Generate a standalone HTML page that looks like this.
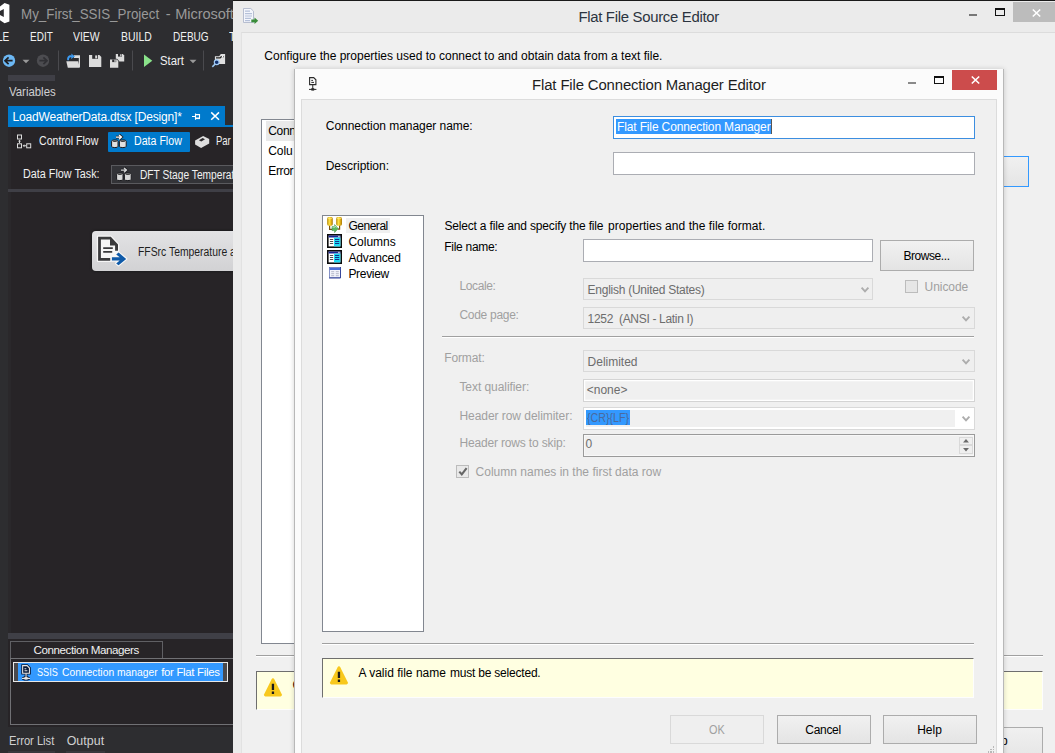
<!DOCTYPE html>
<html><head><meta charset="utf-8"><title>Flat File Connection Manager Editor</title>
<style>
html,body{margin:0;padding:0;}
body{width:1055px;height:753px;overflow:hidden;position:relative;background:#2d2d30;font-family:"Liberation Sans",sans-serif;}
.t{position:absolute;white-space:pre;font-family:"Liberation Sans",sans-serif;}
.r{position:absolute;box-sizing:border-box;}
svg{position:absolute;overflow:visible;}
</style></head><body>
<div class="r" style="left:0px;top:0px;width:233px;height:753px;background:#2d2d30;"></div>
<div class="r" style="left:8px;top:127px;width:225px;height:506px;background:#2a282b;"></div>
<div class="r" style="left:11px;top:127px;width:222px;height:506px;background:#272427;"></div>
<span class="t " style="left:21.40px;top:6px;font-size:14.6px;line-height:16px;color:#999999;transform:scaleX(0.9158);transform-origin:0 0;">My_First_SSIS_Project</span>
<span class="t " style="left:165.80px;top:6px;font-size:14.6px;line-height:16px;color:#999999;">-</span>
<span class="t " style="left:175.20px;top:6px;font-size:14.6px;line-height:16px;color:#999999;letter-spacing:-0.058px;">Microsoft</span>
<svg style="left:0;top:3px" width="10" height="21" viewBox="0 0 10 21"><path d="M0 3.6 L4.6 0 L9.4 1.7 V18.5 L4.6 20.2 L0 17.3 Z M3.8 6 L3.8 14 L-4 9.9 Z" fill="#ffffff" fill-rule="evenodd"/></svg>
<span class="t " style="left:-3.40px;top:30px;font-size:12.5px;line-height:14px;color:#f1f1f1;transform:scaleX(0.8045);transform-origin:0 0;">LE</span>
<span class="t " style="left:29.80px;top:30px;font-size:12.5px;line-height:14px;color:#f1f1f1;transform:scaleX(0.8008);transform-origin:0 0;">EDIT</span>
<span class="t " style="left:73.40px;top:30px;font-size:12.5px;line-height:14px;color:#f1f1f1;transform:scaleX(0.8358);transform-origin:0 0;">VIEW</span>
<span class="t " style="left:120.60px;top:30px;font-size:12.5px;line-height:14px;color:#f1f1f1;transform:scaleX(0.8339);transform-origin:0 0;">BUILD</span>
<span class="t " style="left:172.90px;top:30px;font-size:12.5px;line-height:14px;color:#f1f1f1;transform:scaleX(0.8009);transform-origin:0 0;">DEBUG</span>
<span class="t " style="left:229.20px;top:30px;font-size:12.5px;line-height:14px;color:#f1f1f1;transform:scaleX(0.8870);transform-origin:0 0;">TEAM</span>
<svg style="left:0;top:50px" width="233" height="22" viewBox="0 50 233 22"><circle cx="9" cy="60.7" r="6.2" fill="#6cb8f4"/><path d="M8.6 57.3 L5 60.7 L8.6 64.1 M5.2 60.7 H12.6" stroke="#1e1e22" stroke-width="1.7" fill="none"/><path d="M22.5 59.7 H29.5 L26 63.2 Z" fill="#999"/><circle cx="43" cy="60.7" r="6.2" fill="#4c4c50"/><path d="M43.4 57.3 L47 60.7 L43.4 64.1 M46.8 60.7 H39.4" stroke="#303034" stroke-width="1.7" fill="none"/><rect x="58" y="50.5" width="1" height="20" fill="#4a4a4e"/><path d="M66.3 61.2 H78.2 L79.8 67.8 H67.8 Z" fill="#dcdcdc"/><path d="M74 55.2 H80 V67 H78.8 V58 H74 Z" fill="#dcdcdc"/><path d="M67.2 60.2 C66.6 56.5 69.5 54.6 71.6 55.6 L71.2 53.6 L75 56.6 L71 59 L71.4 57.4 C70 56.8 68.8 58 69 60.2 Z" fill="#3c9af0"/><path d="M89 55 H99.4 L101.3 56.9 V67 H89 Z" fill="#dcdcdc"/><rect x="92.2" y="55" width="5.8" height="3.8" fill="#2d2d30"/><rect x="95.2" y="55.4" width="2" height="3" fill="#dcdcdc"/><path d="M115.8 54 H122.8 L124.2 55.4 V61.6 H115.8 Z" fill="#dcdcdc"/><rect x="118" y="54" width="4" height="2.6" fill="#2d2d30"/><rect x="120.2" y="54.2" width="1.3" height="2.2" fill="#dcdcdc"/><path d="M109.2 58.7 H117 L119.2 60.9 V68.6 H109.2 Z" fill="#2d2d30"/><path d="M110 59.5 H116.8 L118.3 61 V67.8 H110 Z" fill="#dcdcdc"/><rect x="112.2" y="59.5" width="4" height="2.6" fill="#2d2d30"/><rect x="114.4" y="59.7" width="1.3" height="2.2" fill="#dcdcdc"/><rect x="132" y="50.5" width="1" height="20" fill="#4a4a4e"/><path d="M144 54.5 L152.3 60.7 L144 67 Z" fill="#8ae28a"/><path d="M189.5 59.7 H196.5 L193 63.2 Z" fill="#999"/><rect x="203" y="50.5" width="1" height="20" fill="#4a4a4e"/><path d="M214.9 56.2 H219.2 L220.8 54 H225.1 V64.1 H214.9 Z" fill="#e0e0e0"/><path d="M216 57.8 H220.2 L221.4 56.6 H224" stroke="#222" stroke-width="1.3" fill="none"/><circle cx="222.6" cy="56.6" r="0.9" fill="#fff"/><path d="M215.2 64 L212.3 66.8" stroke="#9cc8f4" stroke-width="1.6"/><circle cx="216.7" cy="62.3" r="2.4" fill="#12306c" stroke="#a4ccf4" stroke-width="1.2"/></svg>
<span class="t " style="left:160.40px;top:54px;font-size:12.5px;line-height:14px;color:#f1f1f1;transform:scaleX(0.9054);transform-origin:0 0;">Start</span>
<div class="r" style="left:8px;top:74.5px;width:47px;height:6px;background:#3f3f46;"></div>
<span class="t " style="left:8.50px;top:85px;font-size:12.4px;line-height:14px;color:#d0d0d0;transform:scaleX(0.9198);transform-origin:0 0;">Variables</span>
<div class="r" style="left:8px;top:106px;width:217px;height:21px;background:#007acc;"></div>
<div class="r" style="left:8px;top:124.5px;width:225px;height:2.9px;background:#007acc;"></div>
<span class="t " style="left:12.50px;top:110px;font-size:12px;line-height:14px;color:#ffffff;letter-spacing:-0.181px;">LoadWeatherData.dtsx [Design]*</span>
<svg style="left:190px;top:110px" width="32" height="12" viewBox="190 110 32 12"><path d="M192 116.5 H195.5 M195.5 113.5 V119.7 M195.5 114.6 H199.5 V118" stroke="#fff" stroke-width="1.1" fill="none"/><path d="M195.5 118.3 H200" stroke="#fff" stroke-width="1.6"/><path d="M211.2 112.4 L219 119.8 M219 112.4 L211.2 119.8" stroke="#fff" stroke-width="1.5" fill="none"/></svg>
<svg style="left:16px;top:133px" width="17" height="16" viewBox="16 133 17 16"><g fill="none" stroke="#dcdcdc" stroke-width="1"><rect x="17.5" y="135" width="4" height="4"/><rect x="17.5" y="143.8" width="4" height="4"/><rect x="26.7" y="143.8" width="4" height="4"/></g><path d="M19.5 139.8 L21 141.6 H20 V143 H19 V141.6 H18 Z M22.6 145.8 L24.4 144.3 V145.3 H26 V146.3 H24.4 V147.3 Z" fill="#dcdcdc"/></svg>
<span class="t " style="left:38.70px;top:134px;font-size:12px;line-height:14px;color:#f1f1f1;transform:scaleX(0.8804);transform-origin:0 0;">Control Flow</span>
<div class="r" style="left:108px;top:132px;width:82px;height:20px;background:#007acc;border-radius:1px;"></div>
<svg style="left:111.2px;top:134px" width="16" height="15" viewBox="0 0 16 15"><path d="M0.6 7.2 V12.3 A3.2 1.3 0 0 0 7 12.3 V7.2 A3.2 1.3 0 0 0 0.6 7.2 Z" fill="#e0e0e0" stroke="#1a1a1e" stroke-width="1"/><ellipse cx="3.8" cy="7.3" rx="2.3" ry="0.8" fill="#3a3a3a"/><path d="M8.4 7.2 V12.3 A3.4 1.3 0 0 0 15.2 12.3 V7.2 A3.4 1.3 0 0 0 8.4 7.2 Z" fill="#e0e0e0" stroke="#1a1a1e" stroke-width="1"/><ellipse cx="11.8" cy="7.3" rx="2.5" ry="0.8" fill="#3a3a3a"/><path d="M5 3.1 H10 M8 0.9 L10.5 3.1 L8 5.3" fill="none" stroke="#1a1a1e" stroke-width="2.8"/><path d="M5 3.1 H10 M8 0.9 L10.5 3.1 L8 5.3" fill="none" stroke="#fff" stroke-width="1.3"/></svg>
<span class="t " style="left:133.50px;top:134px;font-size:12px;line-height:14px;color:#ffffff;transform:scaleX(0.8849);transform-origin:0 0;">Data Flow</span>
<svg style="left:194px;top:135px" width="16" height="14" viewBox="194 135 16 14"><path d="M195.1 140.6 L203.1 135.9 L209.2 139 V143.6 L201.1 147.9 L195.1 144.4 Z" fill="#dedede"/><path d="M198.9 140.2 L202.6 138 L205 139.3 L201.3 141.6 Z" fill="#2a282b"/></svg>
<span class="t " style="left:216.30px;top:134px;font-size:12px;line-height:14px;color:#f1f1f1;transform:scaleX(0.7903);transform-origin:0 0;">Par</span>
<span class="t " style="left:23.20px;top:167px;font-size:12px;line-height:14px;color:#f1f1f1;transform:scaleX(0.8997);transform-origin:0 0;">Data Flow Task:</span>
<div class="r" style="left:111px;top:165px;width:129px;height:19px;background:#333337;border:1px solid #5a5a5e;"></div>
<svg style="left:116.2px;top:167.3px" width="16" height="15" viewBox="0 0 16 15"><path d="M0.6 7.2 V12.3 A3.2 1.3 0 0 0 7 12.3 V7.2 A3.2 1.3 0 0 0 0.6 7.2 Z" fill="#d8d8d8" stroke="#1a1a1e" stroke-width="1"/><ellipse cx="3.8" cy="7.3" rx="2.3" ry="0.8" fill="#3a3a3a"/><path d="M8.4 7.2 V12.3 A3.4 1.3 0 0 0 15.2 12.3 V7.2 A3.4 1.3 0 0 0 8.4 7.2 Z" fill="#d8d8d8" stroke="#1a1a1e" stroke-width="1"/><ellipse cx="11.8" cy="7.3" rx="2.5" ry="0.8" fill="#3a3a3a"/><path d="M5 3.1 H10 M8 0.9 L10.5 3.1 L8 5.3" fill="none" stroke="#1a1a1e" stroke-width="2.8"/><path d="M5 3.1 H10 M8 0.9 L10.5 3.1 L8 5.3" fill="none" stroke="#d8d8d8" stroke-width="1.3"/></svg>
<span class="t " style="left:140.40px;top:168px;font-size:12px;line-height:14px;color:#f1f1f1;transform:scaleX(0.8501);transform-origin:0 0;">DFT Stage Temperature</span>
<div class="r" style="left:8px;top:189px;width:225px;height:3px;background:#3f3f46;"></div>
<div class="r" style="left:92px;top:231px;width:148px;height:40px;background:linear-gradient(#e2e2e4,#d2d2d4);border-radius:4px;box-shadow:0 0 2px 1px #1c1c1e;"></div>
<svg style="left:96px;top:235px" width="32" height="32" viewBox="96 235 32 32"><path d="M98.1 236.8 H110.8 L118 244.6 V258 H110.2 V260.7 H98.1 Z" fill="#f6f6f6" stroke="#f6f6f6" stroke-width="2.6" stroke-linejoin="round"/><path d="M116.2 254.4 L118.6 252.6 L126.2 258.9 L118.6 265.2 L116.2 263.4 L119.7 260.5 H111.9 V257.2 H119.7 Z" fill="#f6f6f6" stroke="#f6f6f6" stroke-width="2.4" stroke-linejoin="round"/><path d="M98.1 236.8 H110.8 L118 244.6 V250.8 H115.1 V245.4 H110 V239.5 H100.9 V258.1 H110.2 V260.7 H98.1 Z" fill="#3a3a3c"/><path d="M103.2 247.3 H112.8 V248.9 H103.2 Z M103.2 251.1 H112.2 V252.7 H103.2 Z" fill="#3a3a3c"/><path d="M116.2 254.4 L118.6 252.6 L126.2 258.9 L118.6 265.2 L116.2 263.4 L119.7 260.5 H111.9 V257.2 H119.7 Z" fill="#0f5aa8"/></svg>
<span class="t " style="left:138.40px;top:245px;font-size:12px;line-height:14px;color:#1e1e1e;transform:scaleX(0.8648);transform-origin:0 0;">FFSrc Temperature a</span>
<div class="r" style="left:8px;top:633px;width:225px;height:5.5px;background:#3f3f46;"></div>
<div class="r" style="left:8px;top:638.5px;width:225px;height:88.5px;background:#272427;"></div>
<div class="r" style="left:10px;top:641px;width:153px;height:18px;border:1px solid #606064;border-bottom:none;"></div>
<div class="r" style="left:10px;top:658px;width:230px;height:67px;border:1px solid #707074;border-right:none;"></div>
<span class="t " style="left:33.50px;top:644px;font-size:11.6px;line-height:12px;color:#f1f1f1;letter-spacing:-0.421px;">Connection Managers</span>
<div class="r" style="left:13px;top:662px;width:215px;height:20px;background:#3399ff;border:1px solid #e8e8e8;"></div>
<div class="r" style="left:14px;top:663px;width:3.7px;height:18px;background:#4a4a4e;"></div>
<div class="r" style="left:223px;top:663px;width:4px;height:18px;background:#4a4a4e;"></div>
<svg style="left:22.2px;top:664.7px" width="8.64" height="15.12" viewBox="0 0 8 14"><path d="M0.6 0.6 H4.7 L6.9 2.8 V7.6 H0.6 Z" fill="#0a1a38" stroke="#0a1a38" stroke-width="2.6"/><path d="M2.3 3.4 H4 M2.3 5.4 H5" stroke="#0a1a38" stroke-width="2.6"/><path d="M3.75 7.6 V12 M0 12.4 H7.4" stroke="#0a1a38" stroke-width="2.6"/><rect x="2.3" y="11.2" width="2.9" height="2.4" fill="#0a1a38" stroke="#0a1a38" stroke-width="1.6"/></svg>
<svg style="left:22.2px;top:664.7px" width="8.64" height="15.12" viewBox="0 0 8 14"><path d="M0.6 0.6 H4.7 L6.9 2.8 V7.6 H0.6 Z" fill="none" stroke="#e6e6e6" stroke-width="1"/><path d="M2.3 3.4 H4 M2.3 5.4 H5" stroke="#e6e6e6" stroke-width="1"/><path d="M3.75 7.6 V12 M0 12.4 H7.4" stroke="#e6e6e6" stroke-width="1"/><rect x="2.3" y="11.2" width="2.9" height="2.4" fill="#e6e6e6" stroke="#e6e6e6" stroke-width="0"/></svg>
<span class="t " style="left:36.60px;top:666px;font-size:11.4px;line-height:12px;color:#ffffff;transform:scaleX(0.8045);transform-origin:0 0;">SSIS</span>
<span class="t " style="left:61.70px;top:666px;font-size:11.4px;line-height:12px;color:#ffffff;transform:scaleX(0.9042);transform-origin:0 0;">Connection manager</span>
<span class="t " style="left:161.20px;top:666px;font-size:11.4px;line-height:12px;color:#ffffff;letter-spacing:-0.301px;">for Flat Files</span>
<span class="t " style="left:8.50px;top:734px;font-size:12.4px;line-height:14px;color:#d0d0d0;transform:scaleX(0.9007);transform-origin:0 0;">Error List</span>
<span class="t " style="left:66.70px;top:734px;font-size:12.4px;line-height:14px;color:#d0d0d0;letter-spacing:0.046px;">Output</span>
<div class="r" style="left:8px;top:751.4px;width:47px;height:1.6px;background:#38383d;"></div>
<div class="r" style="left:66px;top:751.4px;width:39px;height:1.6px;background:#38383d;"></div>
<div class="r" style="left:233px;top:0px;width:827px;height:760px;background:#ebebeb;"></div>
<div class="r" style="left:233px;top:0px;width:827px;height:1px;background:#1a1a1a;"></div>
<div class="r" style="left:240.5px;top:31.5px;width:819.5px;height:728.5px;background:#f0f0f0;border-left:1px solid #e2e2e2;border-top:1px solid #dcdcdc;"></div>
<span class="t " style="left:578.40px;top:9px;font-size:14.9px;line-height:16px;color:#2b3440;letter-spacing:-0.296px;">Flat File Source Editor</span>
<svg style="left:243px;top:8px" width="16" height="16" viewBox="0 0 16 16"><path d="M0.5 0.5 H7.8 L10.5 3.2 V14.5 H0.5 Z" fill="#f4f6fc" stroke="#b0b8cc" stroke-width="0.9"/><path d="M2 3.2 H7 M2 5.6 H9 M2 8 H9 M2 10.4 H8 M2 12.6 H7" stroke="#b4c0d8" stroke-width="1.2"/><path d="M8.3 11.4 H11.5 V9.6 L15.2 12.8 L11.5 16 V14.2 H8.3 Z" fill="#3a8c3a"/></svg>
<div class="r" style="left:969px;top:13.6px;width:8.3px;height:2.2px;background:#777;"></div>
<div class="r" style="left:994.8px;top:7.8px;width:10.4px;height:8.3px;border:1.2px solid #111;border-top-width:2.6px;"></div>
<div class="r" style="left:1012.8px;top:2.2px;width:47.2px;height:19.6px;background:#bcbcbc;"></div>
<svg style="left:1031.5px;top:8.5px" width="9" height="8" viewBox="0 0 9 8"><path d="M0.8 0.5 L8.2 7.5 M8.2 0.5 L0.8 7.5" stroke="#fff" stroke-width="1.6" fill="none"/></svg>
<span class="t " style="left:264.30px;top:49px;font-size:12px;line-height:14px;color:#000000;letter-spacing:-0.002px;">Configure the properties used to connect to and obtain data from a text file.</span>
<div class="r" style="left:261px;top:119px;width:139px;height:525px;background:#fff;border:1px solid #828790;"></div>
<div class="r" style="left:266px;top:121.2px;width:134px;height:19.6px;background:#e9e9e9;"></div>
<span class="t " style="left:268.30px;top:124px;font-size:12px;line-height:14px;color:#000;letter-spacing:-0.338px;">Conn</span>
<span class="t " style="left:268.30px;top:144px;font-size:12px;line-height:14px;color:#000;letter-spacing:-0.095px;">Colu</span>
<span class="t " style="left:268.30px;top:164px;font-size:12px;line-height:14px;color:#000;letter-spacing:-0.353px;">Error</span>
<div class="r" style="left:990px;top:156.2px;width:38.8px;height:30.6px;background:linear-gradient(#f0f0f0,#e5e5e5);border:1px solid #3399ff;"></div>
<div class="r" style="left:256px;top:654.8px;width:787px;height:1px;background:#a0a0a0;"></div>
<div class="r" style="left:256px;top:655.8px;width:787px;height:1px;background:#ffffff;"></div>
<div class="r" style="left:256.4px;top:670.5px;width:786.2px;height:39.1px;background:#ffffe1;border-top:1.6px solid #6e6e6e;border-left:1.6px solid #6e6e6e;border-right:1px solid #fdfdfd;border-bottom:1px solid #fdfdfd;"></div>
<svg style="left:263.2px;top:676.9px" width="19.9" height="20.6" viewBox="0 0 19 18" preserveAspectRatio="none"><path d="M9.5 1.2 Q10.4 1.2 10.9 2.1 L17.9 15 Q18.5 16.8 16.8 17 H2.2 Q0.5 16.8 1.1 15 L8.1 2.1 Q8.6 1.2 9.5 1.2 Z" fill="#f8c81c"/><path d="M8.4 5.8 H10.6 V11.3 H8.4 Z M8.4 12.6 H10.6 V14.8 H8.4 Z" fill="#1a1a1a"/></svg>
<span class="t " style="left:292.50px;top:678px;font-size:12px;line-height:14px;color:#200000;">Connection manager</span>
<div class="r" style="left:960px;top:727.3px;width:82.9px;height:32.7px;background:linear-gradient(#f0f0f0,#e5e5e5);border:1px solid #acacac;"></div>
<span class="t " style="left:984.00px;top:734px;font-size:12px;line-height:14px;color:#000;letter-spacing:-0.345px;">Help</span>
<div class="r" style="left:294px;top:68.6px;width:710.2px;height:691.4px;background:#b8b8b8;box-shadow:0 0 5px rgba(0,0,0,0.17);"></div>
<div class="r" style="left:295px;top:69.4px;width:708.4px;height:690.6px;background:#fbfbfb;"></div>
<div class="r" style="left:301px;top:99.4px;width:695.6px;height:660.6px;background:#f0f0f0;border:1px solid #dcdcdc;border-bottom:none;"></div>
<span class="t " style="left:532.10px;top:77px;font-size:14.9px;line-height:16px;color:#1e1e1e;letter-spacing:-0.135px;">Flat File Connection Manager Editor</span>
<svg style="left:308.6px;top:76.8px" width="8" height="14" viewBox="0 0 8 14"><path d="M0.6 0.6 H4.7 L6.9 2.8 V7.6 H0.6 Z" fill="none" stroke="#2a2a2a" stroke-width="1.1"/><path d="M2.3 3.4 H4 M2.3 5.4 H5" stroke="#2a2a2a" stroke-width="1"/><path d="M3.75 7.6 V12 M0 12.4 H7.4" stroke="#2a2a2a" stroke-width="1"/><rect x="2.3" y="11.2" width="2.9" height="2.4" fill="#2a2a2a" stroke="#2a2a2a" stroke-width="0"/></svg>
<div class="r" style="left:907.8px;top:81.7px;width:8.5px;height:2.2px;background:#8a8a8a;"></div>
<div class="r" style="left:934px;top:76px;width:10.2px;height:8.2px;border:1.2px solid #111;border-top-width:2.6px;"></div>
<div class="r" style="left:952.2px;top:69.7px;width:44.6px;height:20.1px;background:#cc4c4c;"></div>
<svg style="left:970.5px;top:76px" width="9" height="8" viewBox="0 0 9 8"><path d="M0.8 0.5 L8.2 7.5 M8.2 0.5 L0.8 7.5" stroke="#fff" stroke-width="1.6" fill="none"/></svg>
<span class="t " style="left:325.80px;top:119px;font-size:12px;line-height:14px;color:#000;letter-spacing:-0.054px;">Connection manager name:</span>
<div class="r" style="left:613px;top:116px;width:362px;height:23px;background:#fff;border:1px solid #3c8ee0;"></div>
<div class="r" style="left:616px;top:119px;width:155.5px;height:15px;background:#3399ff;"></div>
<span class="t " style="left:617.00px;top:120px;font-size:12px;line-height:14px;color:#fff;letter-spacing:-0.140px;">Flat File Connection Manager</span>
<div class="r" style="left:771px;top:119px;width:1px;height:15px;background:#555;"></div>
<span class="t " style="left:325.70px;top:159px;font-size:12px;line-height:14px;color:#000;">Description:</span>
<div class="r" style="left:613px;top:152px;width:362px;height:23px;background:#fff;border:1px solid #abadb3;"></div>
<div class="r" style="left:322px;top:215px;width:102px;height:417px;background:#fff;border:1px solid #828790;"></div>
<div class="r" style="left:346px;top:218px;width:44px;height:15px;background:#f0f0f0;"></div>
<span class="t " style="left:348.40px;top:219px;font-size:12px;line-height:14px;color:#000;letter-spacing:-0.470px;">General</span>
<span class="t " style="left:348.40px;top:235px;font-size:12px;line-height:14px;color:#000;letter-spacing:0.007px;">Columns</span>
<span class="t " style="left:348.40px;top:251px;font-size:12px;line-height:14px;color:#000;letter-spacing:-0.134px;">Advanced</span>
<span class="t " style="left:348.40px;top:267px;font-size:12px;line-height:14px;color:#000;letter-spacing:-0.311px;">Preview</span>
<svg style="left:326px;top:216px" width="18" height="18" viewBox="326 216 18 18"><defs><linearGradient id="cy" x1="0" x2="1" y1="0" y2="0"><stop offset="0" stop-color="#b88a10"/><stop offset="0.4" stop-color="#fce040"/><stop offset="0.6" stop-color="#f4c420"/><stop offset="1" stop-color="#a87808"/></linearGradient></defs><path d="M329.6 225 V229.3 H333 M339.6 225 V229.2 H337.6" stroke="#7a5210" stroke-width="1.2" fill="none"/><rect x="327.1" y="217" width="5.7" height="8.7" rx="1.6" fill="url(#cy)"/><rect x="336.1" y="217" width="5.9" height="8.7" rx="1.6" fill="url(#cy)"/><path d="M327.6 218.2 Q330 219.4 332.3 218.2 M336.6 218.2 Q339 219.4 341.5 218.2" stroke="#fff4a0" stroke-width="0.6" fill="none"/><path d="M332 226.6 H334.6 V224.6 L338.2 228.6 L334.6 232.6 V230.6 H332 Z" fill="#5cb85c" stroke="#3c8c3c" stroke-width="0.5"/><path d="M332.3 227.2 H335 V225.8 L336.6 227.6" stroke="#c8ecc8" stroke-width="0.8" fill="none"/></svg>
<svg style="left:327px;top:234px" width="15" height="14" viewBox="0 0 15 14"><rect x="0" y="0" width="15" height="14" fill="#0c0c0c"/><rect x="1.6" y="1.6" width="11.8" height="10.8" fill="#ffffff"/><rect x="1.6" y="1.6" width="11.8" height="1.9" fill="#1a2494"/><rect x="11.3" y="1.9" width="1.3" height="1.2" fill="#fff"/><rect x="7" y="3.6" width="6.4" height="8.8" fill="#20dcf4"/><path d="M2.9 5.5 H6.2 M2.9 7.5 H6.2 M2.9 9.5 H6.2" stroke="#505050" stroke-width="1"/><path d="M8 5.5 H12.2 M8 7.5 H12.2 M8 9.5 H12.2" stroke="#10308c" stroke-width="1.1"/></svg>
<svg style="left:327px;top:250px" width="15" height="14" viewBox="0 0 15 14"><rect x="0" y="0" width="15" height="14" fill="#0c0c0c"/><rect x="1.6" y="1.6" width="11.8" height="10.8" fill="#ffffff"/><rect x="1.6" y="1.6" width="11.8" height="1.9" fill="#1a2494"/><rect x="11.3" y="1.9" width="1.3" height="1.2" fill="#fff"/><rect x="7" y="3.6" width="6.4" height="8.8" fill="#20dcf4"/><path d="M2.9 5.5 H6.2 M2.9 7.5 H6.2 M2.9 9.5 H6.2" stroke="#505050" stroke-width="1"/><path d="M8 5.5 H12.2 M8 7.5 H12.2 M8 9.5 H12.2" stroke="#10308c" stroke-width="1.1"/></svg>
<svg style="left:329px;top:267px" width="12" height="11" viewBox="0 0 12 11"><rect x="0.4" y="0.4" width="11.2" height="10.2" fill="#f2f4fc" stroke="#6878b8" stroke-width="0.8"/><path d="M11.5 0 V11 H0" stroke="#38489c" stroke-width="1" fill="none"/><rect x="0.8" y="0.8" width="10.4" height="2.2" fill="#4c70d8"/><path d="M2.2 4.7 H5.2 M2.2 6.7 H5.2 M2.2 8.7 H5.2 M6.8 4.7 H9.8 M6.8 6.7 H9.8 M6.8 8.7 H9.8" stroke="#b4b8c8" stroke-width="1"/></svg>
<span class="t " style="left:444.40px;top:219px;font-size:12px;line-height:14px;color:#000;letter-spacing:-0.172px;">Select a file and specify the file</span>
<span class="t " style="left:608.00px;top:219px;font-size:12px;line-height:14px;color:#000;letter-spacing:0.039px;">properties and the file format.</span>
<span class="t " style="left:444.30px;top:240px;font-size:12px;line-height:14px;color:#000;letter-spacing:-0.292px;">File name:</span>
<div class="r" style="left:583px;top:239px;width:290px;height:23px;background:#fff;border:1px solid #abadb3;"></div>
<div class="r" style="left:880px;top:240px;width:94px;height:31px;background:linear-gradient(#f1f1f1,#e4e4e4);border:1px solid #acacac;"></div>
<span class="t " style="left:903.40px;top:249px;font-size:12px;line-height:14px;color:#000;letter-spacing:-0.424px;">Browse...</span>
<span class="t " style="left:459.40px;top:279px;font-size:12px;line-height:14px;color:#a0a0a0;letter-spacing:-0.371px;">Locale:</span>
<div class="r" style="left:583px;top:278px;width:290px;height:22.3px;background:#efefef;border:1px solid #d9d9d9;"></div>
<span class="t " style="left:587.60px;top:283px;font-size:12px;line-height:14px;color:#6d6d6d;letter-spacing:-0.258px;">English (United States)</span>
<svg style="left:860.5px;top:287px" width="8" height="6" viewBox="0 0 8 6"><path d="M0.6 0.6 L4 4.4 L7.4 0.6" stroke="#adadad" stroke-width="1.9" fill="none"/></svg>
<div class="r" style="left:905px;top:280px;width:13px;height:12.8px;background:#e6e6e6;border:1px solid #bcbcbc;"></div>
<span class="t " style="left:924.60px;top:280px;font-size:12px;line-height:14px;color:#a0a0a0;letter-spacing:-0.061px;">Unicode</span>
<span class="t " style="left:459.40px;top:308px;font-size:12px;line-height:14px;color:#a0a0a0;letter-spacing:-0.285px;">Code page:</span>
<div class="r" style="left:583px;top:307.3px;width:392px;height:22.2px;background:#efefef;border:1px solid #d9d9d9;"></div>
<span class="t " style="left:587.60px;top:312px;font-size:12px;line-height:14px;color:#6d6d6d;letter-spacing:-0.323px;">1252  (ANSI - Latin I)</span>
<svg style="left:962.4px;top:316px" width="8" height="6" viewBox="0 0 8 6"><path d="M0.6 0.6 L4 4.4 L7.4 0.6" stroke="#adadad" stroke-width="1.9" fill="none"/></svg>
<div class="r" style="left:441.5px;top:336px;width:532.5px;height:1px;background:#a0a0a0;"></div>
<div class="r" style="left:441.5px;top:337px;width:532.5px;height:1px;background:#fff;"></div>
<span class="t " style="left:444.30px;top:351px;font-size:12px;line-height:14px;color:#a0a0a0;letter-spacing:-0.148px;">Format:</span>
<div class="r" style="left:583px;top:350.2px;width:392px;height:22.2px;background:#efefef;border:1px solid #d9d9d9;"></div>
<span class="t " style="left:587.60px;top:355px;font-size:12px;line-height:14px;color:#6d6d6d;letter-spacing:-0.013px;">Delimited</span>
<svg style="left:962.4px;top:359px" width="8" height="6" viewBox="0 0 8 6"><path d="M0.6 0.6 L4 4.4 L7.4 0.6" stroke="#adadad" stroke-width="1.9" fill="none"/></svg>
<span class="t " style="left:459.40px;top:380px;font-size:12px;line-height:14px;color:#a0a0a0;letter-spacing:-0.060px;">Text qualifier:</span>
<div class="r" style="left:583px;top:379.2px;width:392px;height:22.6px;background:#f0f0f0;border:1px solid #d4d4d4;box-shadow:inset 0 0 0 1.2px #fff;"></div>
<span class="t " style="left:586.80px;top:383px;font-size:12px;line-height:14px;color:#6d6d6d;letter-spacing:-0.018px;">&lt;none&gt;</span>
<span class="t " style="left:459.40px;top:409px;font-size:12px;line-height:14px;color:#a0a0a0;letter-spacing:-0.045px;">Header row delimiter:</span>
<div class="r" style="left:583px;top:407.2px;width:392px;height:22.5px;background:#fff;border:1px solid #d9d9d9;"></div>
<div class="r" style="left:585.5px;top:409.7px;width:369.5px;height:17.1px;background:#f0f0f0;"></div>
<div class="r" style="left:586.3px;top:410.1px;width:43.7px;height:14.7px;background:#3399ff;"></div>
<span class="t " style="left:587.20px;top:411px;font-size:12px;line-height:14px;color:#4a6a9e;transform:scaleX(0.8867);transform-origin:0 0;">{CR}{LF}</span>
<svg style="left:962.4px;top:416px" width="8" height="6" viewBox="0 0 8 6"><path d="M0.6 0.6 L4 4.4 L7.4 0.6" stroke="#adadad" stroke-width="1.9" fill="none"/></svg>
<span class="t " style="left:459.40px;top:436px;font-size:12px;line-height:14px;color:#a0a0a0;letter-spacing:-0.159px;">Header rows to skip:</span>
<div class="r" style="left:583px;top:434px;width:392px;height:22.8px;background:#f0f0f0;border:1px solid #9a9a9a;box-shadow:inset 0 0 0 1px #f8f8f8;"></div>
<span class="t " style="left:585.50px;top:437px;font-size:12px;line-height:14px;color:#6d6d6d;">0</span>
<div class="r" style="left:959.2px;top:436.5px;width:13.4px;height:8.3px;background:#efefef;border:1px solid #d9d9d9;"></div>
<div class="r" style="left:959.2px;top:445.2px;width:13.4px;height:9px;background:#efefef;border:1px solid #d9d9d9;"></div>
<svg style="left:963px;top:439px" width="6" height="3.4" viewBox="0 0 7 4"><path d="M0 4 L3.5 0 L7 4 Z" fill="#6a6a6a"/></svg>
<svg style="left:963px;top:448.2px" width="6" height="3.4" viewBox="0 0 7 4"><path d="M0 0 L3.5 4 L7 0 Z" fill="#6a6a6a"/></svg>
<div class="r" style="left:456.2px;top:465px;width:13px;height:13px;background:#e9e9e9;border:1px solid #bcbcbc;"></div>
<svg style="left:458px;top:467px" width="10" height="9" viewBox="0 0 10 9"><path d="M1.3 4.6 L3.8 7.4 L8.6 1.2" stroke="#666" stroke-width="2.1" fill="none"/></svg>
<span class="t " style="left:475.60px;top:465px;font-size:12px;line-height:14px;color:#a0a0a0;letter-spacing:0.003px;">Column names in the first data row</span>
<div class="r" style="left:322px;top:643px;width:652px;height:1px;background:#a0a0a0;"></div>
<div class="r" style="left:322px;top:644px;width:652px;height:1px;background:#fff;"></div>
<div class="r" style="left:322.4px;top:658.4px;width:651.4px;height:39.6px;background:#ffffe1;border-top:1.6px solid #6e6e6e;border-left:1.6px solid #6e6e6e;border-right:1px solid #fdfdfd;border-bottom:1px solid #fdfdfd;"></div>
<svg style="left:329.4px;top:664.5px" width="19.9" height="20.6" viewBox="0 0 19 18" preserveAspectRatio="none"><path d="M9.5 1.2 Q10.4 1.2 10.9 2.1 L17.9 15 Q18.5 16.8 16.8 17 H2.2 Q0.5 16.8 1.1 15 L8.1 2.1 Q8.6 1.2 9.5 1.2 Z" fill="#f8c81c"/><path d="M8.4 5.8 H10.6 V11.3 H8.4 Z M8.4 12.6 H10.6 V14.8 H8.4 Z" fill="#1a1a1a"/></svg>
<span class="t " style="left:358.50px;top:666px;font-size:12px;line-height:14px;color:#000;letter-spacing:0.001px;">A valid file name</span>
<span class="t " style="left:449.90px;top:666px;font-size:12px;line-height:14px;color:#000;letter-spacing:-0.203px;">must be selected.</span>
<div class="r" style="left:670px;top:715.3px;width:94px;height:28.3px;background:#efefef;border:1px solid #d9d9d9;"></div>
<span class="t " style="left:708.70px;top:723px;font-size:12px;line-height:14px;color:#a0a0a0;transform:scaleX(0.9055);transform-origin:0 0;">OK</span>
<div class="r" style="left:776.8px;top:715.3px;width:94.2px;height:28.3px;background:linear-gradient(#f1f1f1,#e4e4e4);border:1px solid #acacac;"></div>
<span class="t " style="left:805.30px;top:723px;font-size:12px;line-height:14px;color:#000;letter-spacing:-0.309px;">Cancel</span>
<div class="r" style="left:883.4px;top:715.3px;width:93.8px;height:28.3px;background:linear-gradient(#f1f1f1,#e4e4e4);border:1px solid #acacac;"></div>
<span class="t " style="left:917.20px;top:723px;font-size:12px;line-height:14px;color:#000;letter-spacing:0.005px;">Help</span>
<div class="r" style="left:992.5px;top:746px;width:1.5px;height:1.5px;background:#b8b8b8;"></div>
<div class="r" style="left:990px;top:748.5px;width:1.5px;height:1.5px;background:#b8b8b8;"></div>
<div class="r" style="left:992.5px;top:748.5px;width:1.5px;height:1.5px;background:#b8b8b8;"></div>
<div class="r" style="left:987.5px;top:751px;width:1.5px;height:1.5px;background:#b8b8b8;"></div>
<div class="r" style="left:990px;top:751px;width:1.5px;height:1.5px;background:#b8b8b8;"></div>
<div class="r" style="left:992.5px;top:751px;width:1.5px;height:1.5px;background:#b8b8b8;"></div>
</body></html>
